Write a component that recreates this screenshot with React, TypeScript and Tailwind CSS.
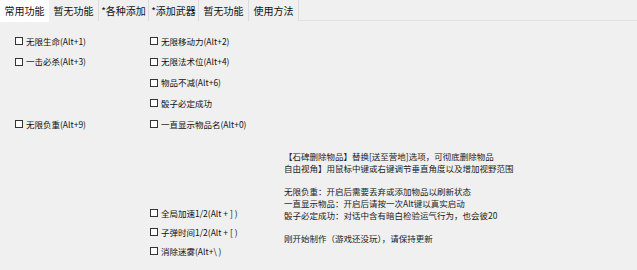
import { useState } from "react";

const tabs = ["常用功能", "暂无功能", "*各种添加", "*添加武器", "暂无功能", "使用方法"];

const Check = ({ label, short }: { label: string; short?: boolean }) => {
  const [on, setOn] = useState(false);
  return (
    <label
      className={
        short
          ? "flex items-center h-[19px] gap-[2px] cursor-default"
          : "flex items-center h-[20.8px] gap-[2px] cursor-default"
      }
    >
      <span
        onClick={() => setOn(!on)}
        className="w-[8px] h-[8px] shrink-0 border border-[#333] bg-white flex items-center justify-center text-[7px] leading-none"
      >
        {on ? "✓" : ""}
      </span>
      <span className="ml-[1px] whitespace-nowrap">{label}</span>
    </label>
  );
};

const notes = [
  "【石碑删除物品】替换[送至营地]选项，可彻底删除物品",
  "自由视角】用鼠标中键或右键调节垂直角度以及增加视野范围",
  "",
  "无限负重：开启后需要丢弃或添加物品以刷新状态",
  "一直显示物品：开启后请按一次Alt键以真实启动",
  "骰子必定成功：对话中含有暗白检验运气行为，也会彼20",
  "",
  "刚开始制作（游戏还没玩），请保持更新",
];

const App = () => {
  const [tab, setTab] = useState(0);

  return (
    <div
      className="w-[637px] h-[270px] bg-[#f0f0f0] text-[#111] overflow-hidden"
      style={{ fontFamily: '"Noto Sans CJK SC", "Noto Sans", sans-serif' }}
    >
      <div className="flex h-[21px] border-b border-[#e2e2e2]">
        {tabs.map((t, i) => (
          <button
            key={i}
            onClick={() => setTab(i)}
            className={
              i === tab
                ? "w-[49px] h-[22px] bg-white text-[10px] leading-none z-10"
                : "w-[50px] h-[21px] bg-[#f0f0f0] border-r border-[#dcdcdc] text-[10px] leading-none"
            }
          >
            {t}
          </button>
        ))}
      </div>

      <div className="flex text-[8.5px] pt-[9.6px]">
        <div className="w-[150px] shrink-0 pl-[15px] flex flex-col">
          <Check label="无限生命(Alt+1)" />
          <Check label="一击必杀(Alt+3)" />
          <div className="mt-[41.6px]">
            <Check label="无限负重(Alt+9)" />
          </div>
        </div>

        <div className="w-[134px] shrink-0 flex flex-col">
          <Check label="无限移动力(Alt+2)" />
          <Check label="无限法术位(Alt+4)" />
          <Check label="物品不减(Alt+6)" />
          <Check label="骰子必定成功" />
          <Check label="一直显示物品名(Alt+0)" />
          <div className="mt-[69px] flex flex-col">
            <Check short label="全局加速1/2(Alt + ] )" />
            <Check short label="子弹时间1/2(Alt + [ )" />
            <Check short label="消除迷雾(Alt+\ )" />
          </div>
        </div>

        <div className="pt-[120.5px] leading-[11.7px] text-[#222]">
          {notes.map((n, i) => (
            <p key={i} className="h-[11.7px] whitespace-nowrap">
              {n}
            </p>
          ))}
        </div>
      </div>
    </div>
  );
};

export default App;
